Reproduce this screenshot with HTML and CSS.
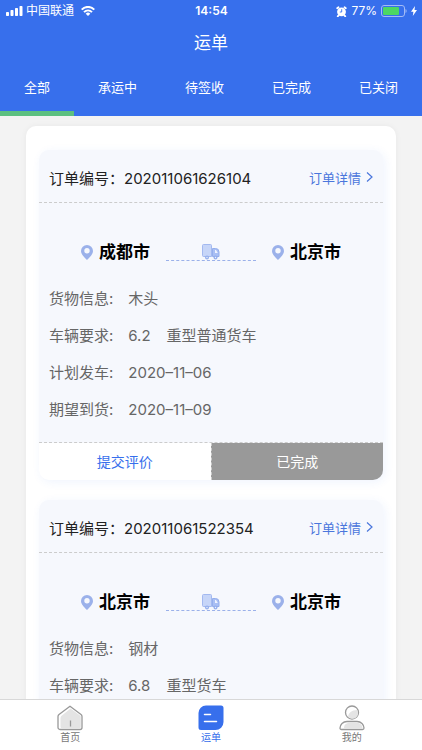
FILE: index.html
```html
<!DOCTYPE html>
<html lang="zh-CN">
<head>
  <meta charset="utf-8">
  <meta name="viewport" content="width=device-width, initial-scale=1">
  <title>运单</title>
  <link rel="stylesheet" href="styles.css">
</head>
<body>
  <!-- shared icons -->
  <svg class="sprite" aria-hidden="true">
    <symbol id="icon-pin" viewBox="0 0 12 15">
      <path fill="#9bb1ea" fill-rule="evenodd" d="M6 0a6 6 0 0 1 6 6c0 3.200-3 6-6 9C3 12 0 9.200 0 6a6 6 0 0 1 6-6zm0 3a2.700 2.700 0 1 0 0 5.400A2.700 2.700 0 0 0 6 3z"/>
    </symbol>
    <symbol id="icon-truck" viewBox="0 0 18 16">
      <path fill="#c6d5f8" stroke="#a3b9f0" d="M1.500 .5h7a1 1 0 0 1 1 1V12.500h-8a1 1 0 0 1-1-1V1.500a1 1 0 0 1 1-1z"/>
      <path fill="#a9bff4" stroke="#94aeec" d="M10.500 4.500h3a3.500 3.500 0 0 1 3.500 3.500v4.500h-6.500z"/>
      <path fill="#eef3ff" d="M13 6h1l1.800 3H13z"/>
      <circle cx="5" cy="13.500" r="2" fill="#94aeec"/>
      <circle cx="13.500" cy="13.500" r="2" fill="#94aeec"/>
      <circle cx="5" cy="13.500" r=".7" fill="#eef3ff"/>
      <circle cx="13.500" cy="13.500" r=".7" fill="#eef3ff"/>
    </symbol>
    <symbol id="icon-arrow" viewBox="0 0 7 12">
      <path fill="none" stroke="#4a76dc" stroke-width="1.200" d="M1 1.500L6 6l-5 4.500"/>
    </symbol>
  </svg>

  <header class="header">
    <div class="status-bar">
      <div class="status-left">
        <svg width="17" height="10" viewBox="0 0 17 10" fill="#fff" aria-hidden="true">
          <rect x="0" y="6" width="3" height="4" rx=".7"/>
          <rect x="4.500" y="4" width="3" height="6" rx=".7"/>
          <rect x="9" y="2" width="3" height="8" rx=".7"/>
          <rect x="13.500" y="0" width="3" height="10" rx=".7"/>
        </svg>
        <span class="carrier">中国联通</span>
        <svg width="14" height="10" viewBox="0 0 14 10" fill="none" stroke="#fff" stroke-width="2" aria-hidden="true">
          <path d="M.7 3.600C4.300 0 9.700 0 13.300 3.600M3 6.100c2.300-2.200 5.700-2.200 8 0"/>
          <path fill="#fff" stroke="none" d="M7 10L4.700 7.700a3.300 3.300 0 0 1 4.600 0z"/>
        </svg>
      </div>
      <span class="time">14:54</span>
      <div class="status-right">
        <svg width="11" height="11" viewBox="0 0 11 11" aria-hidden="true">
          <path stroke="#fff" stroke-width="1.800" stroke-linecap="round" d="M1.200 2.200l1.300-1M9.800 2.200l-1.300-1M2.500 9.500l-.8.800M8.500 9.500l.8.800"/>
          <circle cx="5.500" cy="5.800" r="4.400" fill="#fff"/>
          <path fill="none" stroke="#376fec" stroke-width=".9" d="M5.700 3.200v2.800H3.800"/>
        </svg>
        <span class="percent">77%</span>
        <svg width="26" height="12" viewBox="0 0 26 12" aria-hidden="true">
          <rect x=".5" y=".5" width="23" height="11" rx="2.500" fill="none" stroke="#a3bbf6"/>
          <rect x="2" y="2" width="16" height="8" rx="1" fill="#4cd763"/>
          <path fill="#a3bbf6" d="M24.500 4c1.500.5 1.500 3.500 0 4z"/>
        </svg>
        <svg width="6" height="10" viewBox="0 0 6 10" aria-hidden="true">
          <path fill="#fff" d="M4 0L0 5.800h2.400L1.800 10 6 4H3.500z"/>
        </svg>
      </div>
    </div>
    <h1 class="title">运单</h1>
    <nav class="tabs">
      <button class="tab active" type="button">全部</button>
      <button class="tab" type="button">承运中</button>
      <button class="tab" type="button">待签收</button>
      <button class="tab" type="button">已完成</button>
      <button class="tab" type="button">已关闭</button>
    </nav>
  </header>

  <main class="content">
    <div class="panel">
      <article class="order">
        <div class="order-head">
          <h2 class="order-no">订单编号：202011061626104</h2>
          <a class="detail" href="#">订单详情<svg width="7" height="12"><use href="#icon-arrow"/></svg></a>
        </div>
        <div class="route">
          <div class="city"><svg width="12" height="15"><use href="#icon-pin"/></svg>成都市</div>
          <div class="road"><svg width="18" height="16"><use href="#icon-truck"/></svg></div>
          <div class="city"><svg width="12" height="15"><use href="#icon-pin"/></svg>北京市</div>
        </div>
        <dl class="info">
          <dt>货物信息:</dt><dd>木头</dd>
          <dt>车辆要求:</dt><dd><span class="spec">6.2</span>重型普通货车</dd>
          <dt>计划发车:</dt><dd>2020–11–06</dd>
          <dt>期望到货:</dt><dd>2020–11–09</dd>
        </dl>
        <div class="actions">
          <button class="action" type="button">提交评价</button>
          <button class="action done" type="button">已完成</button>
        </div>
      </article>

      <article class="order">
        <div class="order-head">
          <h2 class="order-no">订单编号：202011061522354</h2>
          <a class="detail" href="#">订单详情<svg width="7" height="12"><use href="#icon-arrow"/></svg></a>
        </div>
        <div class="route">
          <div class="city"><svg width="12" height="15"><use href="#icon-pin"/></svg>北京市</div>
          <div class="road"><svg width="18" height="16"><use href="#icon-truck"/></svg></div>
          <div class="city"><svg width="12" height="15"><use href="#icon-pin"/></svg>北京市</div>
        </div>
        <dl class="info">
          <dt>货物信息:</dt><dd>钢材</dd>
          <dt>车辆要求:</dt><dd><span class="spec">6.8</span>重型货车</dd>
        </dl>
      </article>
    </div>
  </main>

  <nav class="tabbar">
    <a class="tabbar-item" href="#">
      <svg width="26" height="26" viewBox="0 0 26 26" aria-hidden="true">
        <path fill="#fff" stroke="#999" stroke-width="1.300" stroke-linejoin="round" d="M13 1.200L24 9.500q1 .8 1 2V22.500a2 2 0 0 1-2 2H3a2 2 0 0 1-2-2V11.500q0-1.200 1-2z"/>
        <path fill="#e4e4e4" d="M13.500 3.500L23 10.500q.8.500.8 1.500v10q0 1.300-1.300 1.300H5q-1.500 0-1.500-1.500V13q0-1.200.8-2z"/>
        <path stroke="#999" stroke-width="1.300" d="M13.500 15.500v6"/>
      </svg>
      首页
    </a>
    <a class="tabbar-item active" href="#">
      <svg width="26" height="26" viewBox="0 0 26 26" aria-hidden="true">
        <path fill="#376fec" d="M8 .5h15a2.500 2.500 0 0 1 2.500 2.500v14a8 8 0 0 1-8 8H3A2.500 2.500 0 0 1 .5 22.500V8A7.500 7.500 0 0 1 8 .5z"/>
        <path stroke="#fff" stroke-width="1.500" stroke-linecap="round" d="M6.500 9.500h6M6.500 16.500h12"/>
      </svg>
      运单
    </a>
    <a class="tabbar-item" href="#">
      <svg width="26" height="26" viewBox="0 0 26 26" aria-hidden="true">
        <circle cx="13" cy="7.500" r="6.500" fill="#fff" stroke="#999" stroke-width="1.300"/>
        <path fill="#e4e4e4" d="M18 5a5.400 5.400 0 0 1-9 6.500C9.500 8 12.500 5 18 5z"/>
        <path fill="#fff" stroke="#999" stroke-width="1.300" stroke-linejoin="round" d="M8 16.500h10c4 0 7 3 7 6.500 0 1-.5 1.500-1.500 1.500h-21C1.500 24.500 1 24 1 23c0-3.500 3-6.500 7-6.500z"/>
        <path fill="#e4e4e4" d="M9 18h9c3 0 5.500 2 5.500 5.200H5C5 20.500 6 18.500 9 18z"/>
      </svg>
      我的
    </a>
  </nav>
</body>
</html>
```
FILE: styles.css
```css
* {
  box-sizing: border-box;
}
body {
  margin: 0;
  height: 100vh;
  display: flex;
  flex-direction: column;
  background-color: #f3f3f3;
  color: #222;
  font-family: Inter, "Noto Sans CJK SC", sans-serif;
  font-size: 15px;
}
button {
  font-family: inherit;
  border: none;
  background: none;
  padding: 0;
  cursor: pointer;
}
a {
  text-decoration: none;
}
svg {
  flex-shrink: 0;
}
.sprite {
  position: absolute;
  width: 0;
  height: 0;
}

/* header */
.header {
  flex-shrink: 0;
  background-color: #376fec;
  color: #fff;
}
.status-bar {
  display: grid;
  grid-template-columns: 1fr auto 1fr;
  align-items: center;
  height: 22px;
  padding: 0 5px 0 6px;
  font-size: 12px;
  line-height: 16px;
}
.status-left, .status-right {
  display: flex;
  align-items: center;
}
.status-right {
  justify-content: flex-end;
  gap: 4px;
}
.carrier {
  margin: 0 7px 0 3px;
}
.time {
  font-weight: 600;
}
.title {
  margin: 0;
  font-size: 17px;
  font-weight: 400;
  line-height: 42px;
  text-align: center;
}
.tabs {
  display: flex;
  justify-content: space-between;
}
.tab {
  height: 52px;
  padding: 0 24px 2px;
  border-bottom: 5px solid transparent;
  color: #fff;
  font-size: 13px;
}
.tab.active {
  border-bottom-color: #5cc080;
}

/* order list */
.content {
  flex: 1;
  min-height: 0;
  overflow-y: auto;
  scrollbar-width: none;
  padding: 10px 26px;
}
.panel {
  padding: 24px 13px;
  border-radius: 10px;
  background-color: #fff;
  box-shadow: 0 0 6px rgba(0, 0, 0, 0.05);
}
.order {
  margin-bottom: 20px;
  border-radius: 10px;
  background-color: #f6f8fd;
  box-shadow: 2px 2px 10px rgba(55, 111, 236, 0.08);
  overflow: hidden;
}
.order-head {
  display: flex;
  justify-content: space-between;
  align-items: center;
  height: 53px;
  padding: 2px 10px 0;
  border-bottom: 1px dashed #ccc;
}
.order-no {
  margin: 0;
  font-size: 15px;
  font-weight: 400;
}
.detail {
  display: flex;
  align-items: center;
  gap: 5px;
  color: #4a76dc;
  font-size: 13px;
}
.route {
  display: flex;
  justify-content: center;
  align-items: center;
  gap: 16px;
  padding-top: 32px;
}
.city {
  display: flex;
  align-items: center;
  gap: 6px;
  color: #000;
  font-size: 17px;
  font-weight: 700;
  line-height: 34px;
}
.road {
  display: flex;
  justify-content: center;
  width: 90px;
  border-bottom: 1px dashed #9bb1ea;
}
.info {
  display: grid;
  grid-template-columns: auto 1fr;
  column-gap: 15px;
  margin: 0;
  padding: 11px 10px 14px;
  color: #666;
  line-height: 37px;
}
.info dd {
  margin: 0;
}
.spec {
  margin-right: 16px;
}
.actions {
  display: flex;
  border-top: 1px dashed #ccc;
}
.action {
  flex: 1;
  height: 37px;
  padding-bottom: 2px;
  background-color: #fff;
  color: #376fec;
  font-size: 14px;
}
.action.done {
  border-left: 1px dashed #ccc;
  background-color: #999;
  color: #fff;
}

/* bottom navigation */
.tabbar {
  display: flex;
  flex-shrink: 0;
  height: 51px;
  border-top: 1px solid #d8d8d8;
  background-color: #fff;
}
.tabbar-item {
  flex: 1;
  display: flex;
  flex-direction: column;
  align-items: center;
  padding-top: 5px;
  color: #777;
  font-size: 10px;
  line-height: 13px;
}
.tabbar-item.active {
  color: #376fec;
}
```
